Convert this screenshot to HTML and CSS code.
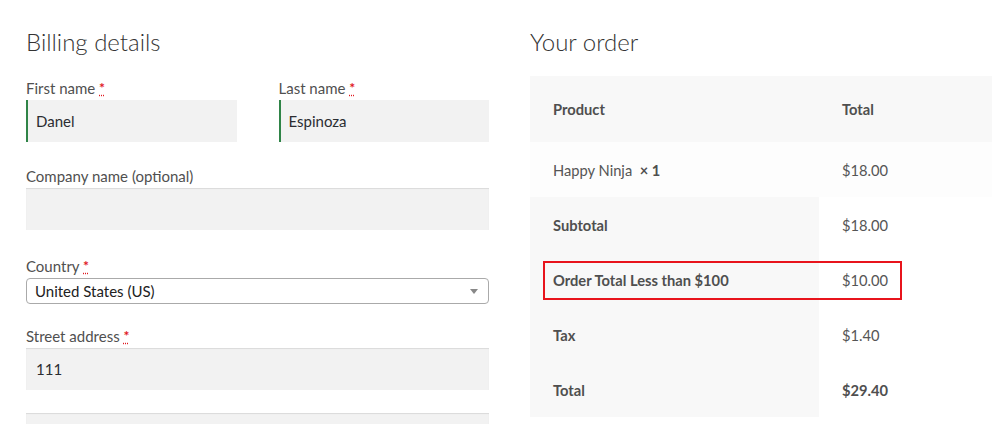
FILE: index.html
```html
<!DOCTYPE html>
<html lang="en">
<head>
<meta charset="utf-8">
<title>Checkout</title>
<link rel="stylesheet" href="styles.css">
</head>
<body>
<div class="checkout">
  <section class="billing">
    <h3 class="section-title">Billing details</h3>
    <div class="fields">
      <div class="row-pair">
        <div class="field">
          <label class="label">First name <abbr class="req" title="required">*</abbr></label>
          <div class="input validated">Danel</div>
        </div>
        <div class="field">
          <label class="label">Last name <abbr class="req" title="required">*</abbr></label>
          <div class="input validated">Espinoza</div>
        </div>
      </div>
      <div class="field">
        <label class="label">Company name (optional)</label>
        <div class="input"></div>
      </div>
      <div class="field field-select">
        <label class="label">Country <abbr class="req" title="required">*</abbr></label>
        <div class="select">
          <span>United States (US)</span>
          <span class="arrow"></span>
        </div>
      </div>
      <div class="field">
        <label class="label">Street address <abbr class="req" title="required">*</abbr></label>
        <div class="input">111</div>
      </div>
      <div class="field field-nolabel">
        <div class="input"></div>
      </div>
    </div>
  </section>
  <section class="order">
    <h3 class="section-title">Your order</h3>
    <div class="table-wrap">
      <table class="order-table">
        <thead>
          <tr><th class="c1">Product</th><th class="c2">Total</th></tr>
        </thead>
        <tbody>
          <tr class="item"><td class="c1">Happy Ninja&nbsp; <strong>×&nbsp;1</strong></td><td class="c2">$18.00</td></tr>
        </tbody>
        <tfoot>
          <tr><th class="c1">Subtotal</th><td class="c2">$18.00</td></tr>
          <tr><th class="c1">Order Total Less than $100</th><td class="c2">$10.00</td></tr>
          <tr><th class="c1">Tax</th><td class="c2">$1.40</td></tr>
          <tr><th class="c1">Total</th><td class="c2"><strong>$29.40</strong></td></tr>
        </tfoot>
      </table>
      <div class="highlight"></div>
    </div>
  </section>
</div>
</body>
</html>
```
FILE: styles.css
```css
html, body {
  margin: 0;
  padding: 0;
  background: #fff;
}
body {
  font-family: Lato, "Liberation Sans", sans-serif;
  color: #555;
  font-size: 15px;
}
.checkout {
  display: grid;
  grid-template-columns: 463px 462px;
  column-gap: 41px;
  padding: 22px 0 0 26px;
}
.section-title {
  margin: 0 0 14px;
  font-size: 24px;
  line-height: 40px;
  font-weight: 300;
  color: #333;
}
.fields {
  display: flex;
  flex-direction: column;
  gap: 22px;
}
.row-pair {
  display: grid;
  grid-template-columns: 1fr 1fr;
  column-gap: 42px;
}
.label {
  display: block;
  line-height: 24px;
  height: 24px;
  font-size: 15px;
  color: #505050;
}
.req {
  color: #e0181f;
  font-weight: 700;
  text-decoration: underline dotted;
  text-decoration-color: #e0181f;
  text-underline-offset: 2px;
  font-size: 14px;
  vertical-align: 1px;
}
.input {
  height: 42px;
  line-height: 42px;
  padding: 0 10px;
  background: #f2f2f2;
  box-shadow: inset 0 1px 1px rgba(0,0,0,.1);
  color: #2b2d31;
  font-size: 15px;
  box-sizing: border-box;
}
.input.validated {
  box-shadow: inset 2px 0 0 #2f8447;
}
.field-select {
  margin-top: 2px;
  margin-bottom: -2px;
}
.select {
  height: 26px;
  box-sizing: border-box;
  border: 1px solid #aaa;
  border-radius: 4px;
  display: flex;
  align-items: center;
  justify-content: space-between;
  padding: 0 10px 0 8px;
  color: #222;
  font-size: 15px;
}
.arrow {
  width: 0;
  height: 0;
  border-left: 4px solid transparent;
  border-right: 4px solid transparent;
  border-top: 5px solid #888;
}
.field-nolabel {
  margin-top: 1px;
}
.order .table-wrap {
  position: relative;
  margin-top: 2px;
}
.order-table {
  width: 462px;
  border-collapse: collapse;
  font-size: 14.7px;
  color: #555;
}
.order-table th, .order-table td {
  text-align: left;
  padding: 0 0 0 23px;
  height: 55px;
  vertical-align: middle;
}
.order-table th { font-weight: 700; color: #4f4f4f; }
.order-table .c1 { width: 266px; }
.order-table thead th {
  height: 66px;
  background: #f8f8f8;
}
.order-table tbody td {
  background: #fdfdfd;
}
.order-table tfoot th {
  background: #f8f8f8;
}
.order-table tfoot td {
  background: #fff;
}
.order-table strong { font-weight: 700; color: #4f4f4f; }
.highlight {
  position: absolute;
  left: 13px;
  top: 185px;
  width: 359px;
  height: 39px;
  box-sizing: border-box;
  border: 2px solid #e8141c;
  pointer-events: none;
}
```
